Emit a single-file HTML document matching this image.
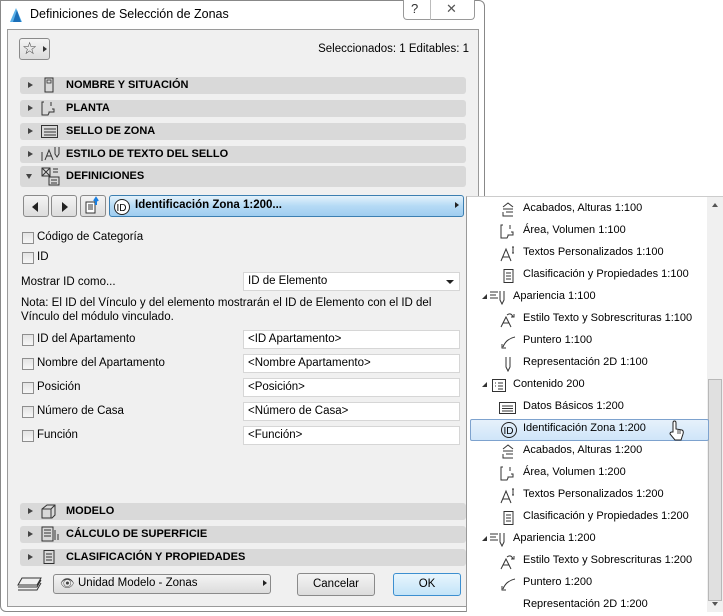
<!DOCTYPE html>
<html><head><meta charset="utf-8"><style>
*{box-sizing:border-box;margin:0;padding:0}
body{width:723px;height:616px;background:#fff;position:relative;overflow:hidden;font-family:"Liberation Sans",sans-serif;font-size:11.5px;color:#000}
.a{position:absolute}
.win{left:0;top:0;width:485px;height:612px;border:1px solid #888;border-radius:0 6px 6px 6px;background:#fff}
.client{left:7px;top:29px;width:472px;height:578px;background:#f0f0f0;border:1px solid #9a9a9a}
.bar{position:absolute;left:20px;width:446px;height:17px;background:#d9d9d9;border-radius:3px;font-weight:bold;font-size:11px}
.bar .t{position:absolute;left:46px;top:2px}
.bar .tri{position:absolute;left:8px;top:5px;width:0;height:0;border-left:5px solid #444;border-top:3.5px solid transparent;border-bottom:3.5px solid transparent}
.bar svg{position:absolute;left:20px;top:0}
.cb{position:absolute;left:22px;width:12px;height:12px;border:1px solid #8e8e8e;background:linear-gradient(#e4e4e4,#f6f6f6)}
.lbl{position:absolute;left:37px}
.inp{position:absolute;left:243px;width:217px;height:19px;background:#fff;border:1px solid #d6d6d6;padding:2px 4px}
.btn{position:absolute;border:1px solid #8a8a8a;border-radius:3px;background:linear-gradient(#f4f4f4,#dcdcdc);text-align:center}
.pop{left:466px;top:196px;width:257px;height:416px;background:#fff;border-left:1px solid #999;border-top:1px solid #ccc}
.it{position:absolute;white-space:nowrap}
.it svg{position:absolute;left:-24px;top:0}
</style></head><body>
<div class="a win"></div>
<svg class="a" style="left:9px;top:7px" width="14" height="16"><path d="M1 15 L7 1 L13 15Z" fill="#5ab0e8"/><path d="M4 15 L8 3 L12 15Z" fill="#1b6fb8"/></svg>
<div class="a" style="left:30px;top:7px;font-size:12.5px">Definiciones de Selección de Zonas</div>
<div class="a" style="left:403px;top:0;width:72px;height:20px;border:1px solid #999;border-top:none;border-radius:0 0 4px 4px;background:#fff"></div>
<div class="a" style="left:430px;top:0;width:1px;height:20px;background:#bbb"></div>
<div class="a" style="left:411px;top:1px;font-size:13px;color:#333">?</div>
<div class="a" style="left:446px;top:1px;font-size:13px;color:#555">✕</div>
<div class="a client"></div>
<div class="btn" style="left:19px;top:38px;width:31px;height:22px"><span style="position:absolute;left:2px;top:0px;font-size:17px;color:#444">☆</span><span style="position:absolute;left:23px;top:7px;border-left:4px solid #333;border-top:3px solid transparent;border-bottom:3px solid transparent"></span></div>
<div class="a" style="right:254px;top:43px">Seleccionados: 1 Editables: 1</div>

<div class="bar" style="top:77px"><span class="tri"></span><svg width="20" height="17"><rect x="5" y="1" width="8" height="14" fill="none" stroke="#333"/><rect x="7" y="3" width="4" height="3" fill="none" stroke="#333" stroke-width=".8"/></svg><span class="t">NOMBRE Y SITUACIÓN</span></div>
<div class="bar" style="top:100px"><span class="tri"></span><svg width="22" height="17"><path d="M4 2H2V15H8L9 13V12H14V9H12" fill="none" stroke="#333"/><path d="M11 2V6" stroke="#333"/></svg><span class="t">PLANTA</span></div>
<div class="bar" style="top:123px"><span class="tri"></span><svg width="22" height="17"><rect x="1.5" y="2.5" width="16" height="12" fill="none" stroke="#333"/><path d="M4 6H16M4 9H16M4 12H16" stroke="#333"/></svg><span class="t">SELLO DE ZONA</span></div>
<div class="bar" style="top:146px"><span class="tri"></span><svg width="26" height="17"><path d="M2 6V15M5 14L9 4L13 14M7 10H11M15 1V8L17 11L19 8V1" fill="none" stroke="#333"/></svg><span class="t">ESTILO DE TEXTO DEL SELLO</span></div>
<div class="bar" style="top:166px;height:21px"><span style="position:absolute;left:6px;top:8px;border-top:5px solid #444;border-left:3.5px solid transparent;border-right:3.5px solid transparent"></span><svg width="24" height="21"><rect x="2" y="2" width="8" height="8" fill="none" stroke="#333"/><path d="M2 2L10 10M10 2L2 10" stroke="#333"/><rect x="9" y="11" width="10" height="8" fill="none" stroke="#333"/><path d="M11 14H17M11 17H17M13 3H18M13 6H18" stroke="#333"/></svg><span class="t" style="top:4px">DEFINICIONES</span></div>

<div class="btn" style="left:23px;top:195px;width:26px;height:22px"><span style="position:absolute;left:8px;top:6px;border-right:6px solid #222;border-top:5px solid transparent;border-bottom:5px solid transparent"></span></div>
<div class="btn" style="left:51px;top:195px;width:26px;height:22px"><span style="position:absolute;left:10px;top:6px;border-left:6px solid #222;border-top:5px solid transparent;border-bottom:5px solid transparent"></span></div>
<div class="btn" style="left:80px;top:195px;width:26px;height:22px"><svg width="24" height="20"><rect x="5" y="6" width="9" height="11" fill="#fff" stroke="#333"/><path d="M7 9H12M7 11H12M7 13H12" stroke="#333"/><path d="M15 9V3M13 5L15 2L17 5" stroke="#1a7fe0" stroke-width="2" fill="none"/></svg></div>
<div class="a" style="left:109px;top:195px;width:355px;height:22px;border:1px solid #3c7fb1;border-radius:3px;background:linear-gradient(#e4f2fb,#b5daf5 50%,#9fcdf0)"><svg class="a" style="left:3px;top:2px" width="18" height="18"><circle cx="9" cy="9" r="7.5" fill="#fff" stroke="#222"/><text x="3.5" y="13" font-size="10" font-family="Liberation Sans">ID</text></svg><span class="a" style="left:25px;top:3px;font-weight:bold">Identificación Zona 1:200...</span><span class="a" style="left:345px;top:6px;border-left:4px solid #222;border-top:3.5px solid transparent;border-bottom:3.5px solid transparent"></span></div>

<div class="cb" style="top:232px"></div><div class="lbl" style="top:231px">Código de Categoría</div>
<div class="cb" style="top:252px"></div><div class="lbl" style="top:251px">ID</div>
<div class="a" style="left:21px;top:276px">Mostrar ID como...</div>
<div class="inp" style="top:272px">ID de Elemento<span class="a" style="right:5px;top:7px;border-top:4px solid #222;border-left:4px solid transparent;border-right:4px solid transparent"></span></div>
<div class="a" style="left:21px;top:296px;line-height:14px;width:440px">Nota: El ID del Vínculo y del elemento mostrarán el ID de Elemento con el ID del Vínculo del módulo vinculado.</div>
<div class="cb" style="top:334px"></div><div class="lbl" style="top:333px">ID del Apartamento</div><div class="inp" style="top:330px">&lt;ID Apartamento&gt;</div>
<div class="cb" style="top:358px"></div><div class="lbl" style="top:357px">Nombre del Apartamento</div><div class="inp" style="top:354px">&lt;Nombre Apartamento&gt;</div>
<div class="cb" style="top:382px"></div><div class="lbl" style="top:381px">Posición</div><div class="inp" style="top:378px">&lt;Posición&gt;</div>
<div class="cb" style="top:406px"></div><div class="lbl" style="top:405px">Número de Casa</div><div class="inp" style="top:402px">&lt;Número de Casa&gt;</div>
<div class="cb" style="top:430px"></div><div class="lbl" style="top:429px">Función</div><div class="inp" style="top:426px">&lt;Función&gt;</div>

<div class="bar" style="top:503px"><span class="tri"></span><svg width="22" height="17"><path d="M2 6L7 2H15V12L12 15H2Z M2 6H11V15 M11 6L15 2" fill="none" stroke="#333"/></svg><span class="t">MODELO</span></div>
<div class="bar" style="top:526px"><span class="tri"></span><svg width="22" height="17"><rect x="2" y="1" width="11" height="14" fill="none" stroke="#333"/><path d="M4 4H11M4 7H11M4 10H11M15 4V14M18 8V14" stroke="#333"/></svg><span class="t">CÁLCULO DE SUPERFICIE</span></div>
<div class="bar" style="top:549px"><span class="tri"></span><svg width="22" height="17"><rect x="4" y="1.5" width="10" height="13" fill="none" stroke="#333"/><path d="M6 5H12M6 8H12M6 11H12" stroke="#333"/></svg><span class="t">CLASIFICACIÓN Y PROPIEDADES</span></div>

<svg class="a" style="left:17px;top:576px" width="26" height="18"><path d="M5 2H24L20 9H1Z M1 11H20L24 4 M1 14H20L24 7" fill="none" stroke="#333"/></svg>
<div class="btn" style="left:53px;top:574px;width:218px;height:20px;text-align:left"><span class="a" style="left:6px;top:1px;color:#444">👁</span><span class="a" style="left:24px;top:2px">Unidad Modelo - Zonas</span><span class="a" style="left:209px;top:5px;border-left:4px solid #222;border-top:3.5px solid transparent;border-bottom:3.5px solid transparent"></span></div>
<div class="btn" style="left:297px;top:573px;width:78px;height:23px;padding-top:4px">Cancelar</div>
<div class="btn" style="left:393px;top:573px;width:68px;height:23px;padding-top:4px;border-color:#3c8fd0;background:linear-gradient(#e8f5fd,#c3e4f8)">OK</div>

<div class="a pop">
<div class="a" style="left:240px;top:0;width:16px;height:415px;background:#f0f0f0"></div>
<div class="a" style="left:241px;top:182px;width:14px;height:222px;background:#e0e0e0;border:1px solid #b8b8b8"></div>
<div class="a" style="left:245px;top:6px;border-bottom:4px solid #555;border-left:3px solid transparent;border-right:3px solid transparent"></div>
<div class="a" style="left:245px;top:405px;border-top:4px solid #555;border-left:3px solid transparent;border-right:3px solid transparent"></div>
<div class="a" style="left:3px;top:222px;width:239px;height:22px;background:linear-gradient(#e6f1fb,#cfe5f9);border:1px solid #7da2ce;border-radius:2px"></div>
</div>
<div class="a" style="left:466px;top:196px;font-size:11px">
<div class="it" style="left:57px;top:6px"><svg width="20" height="16"><path d="M4 5L9 1L14 5M4 7H14M4 10V14H14M7 10H14" fill="none" stroke="#333"/></svg>Acabados, Alturas 1:100</div>
<div class="it" style="left:57px;top:28px"><svg width="20" height="16"><path d="M4 1H2V14H8L9 12V11H14V8H12M11 1V5" fill="none" stroke="#333"/></svg>Área, Volumen 1:100</div>
<div class="it" style="left:57px;top:50px"><svg width="20" height="16"><path d="M2 15L7 3L12 15M4 11H10M14 1V7M13 1H15M13 7H15" fill="none" stroke="#333"/></svg>Textos Personalizados 1:100</div>
<div class="it" style="left:57px;top:72px"><svg width="20" height="16"><rect x="5" y="1.5" width="9" height="13" fill="none" stroke="#333"/><path d="M7 5H12M7 8H12M7 11H12" stroke="#333"/></svg>Clasificación y Propiedades 1:100</div>
<div class="it" style="left:47px;top:94px"><span style="position:absolute;left:-31px;top:4px;border-bottom:5px solid #333;border-left:5px solid transparent"></span><svg width="22" height="18"><path d="M1 2H9M1 5H7M1 8H9M11 1V10L13 14L15 10V1" fill="none" stroke="#333"/></svg>Apariencia 1:100</div>
<div class="it" style="left:57px;top:116px"><svg width="20" height="16"><path d="M2 15L7 5L12 15M4 11H10M8 3Q12 0 14 5M12 5H15V2" fill="none" stroke="#333"/></svg>Estilo Texto y Sobrescrituras 1:100</div>
<div class="it" style="left:57px;top:138px"><svg width="20" height="16"><path d="M4 13Q7 5 16 3M3 10V14H7" fill="none" stroke="#333"/></svg>Puntero 1:100</div>
<div class="it" style="left:57px;top:160px"><svg width="20" height="16"><path d="M7 1V11L9 15L11 11V1" fill="none" stroke="#333"/></svg>Representación 2D 1:100</div>
<div class="it" style="left:47px;top:182px"><span style="position:absolute;left:-31px;top:4px;border-bottom:5px solid #333;border-left:5px solid transparent"></span><svg width="22" height="16"><rect x="3.5" y="1.5" width="13" height="12" fill="none" stroke="#333"/><path d="M6 5H7M9 5H14M6 8H7M9 8H14M9 11H14" stroke="#333"/></svg>Contenido 200</div>
<div class="it" style="left:57px;top:204px"><svg width="22" height="16"><rect x="0.5" y="2.5" width="16" height="11" fill="none" stroke="#333"/><path d="M3 6H14M3 8.5H14M3 11H14" stroke="#333"/></svg>Datos Básicos 1:200</div>
<div class="it" style="left:57px;top:226px"><svg width="22" height="18"><circle cx="10" cy="8" r="7.5" fill="none" stroke="#222"/><text x="4.5" y="12" font-size="10" font-family="Liberation Sans">ID</text></svg>Identificación Zona 1:200</div>
<div class="it" style="left:57px;top:248px"><svg width="20" height="16"><path d="M4 5L9 1L14 5M4 7H14M4 10V14H14M7 10H14" fill="none" stroke="#333"/></svg>Acabados, Alturas 1:200</div>
<div class="it" style="left:57px;top:270px"><svg width="20" height="16"><path d="M4 1H2V14H8L9 12V11H14V8H12M11 1V5" fill="none" stroke="#333"/></svg>Área, Volumen 1:200</div>
<div class="it" style="left:57px;top:292px"><svg width="20" height="16"><path d="M2 15L7 3L12 15M4 11H10M14 1V7M13 1H15M13 7H15" fill="none" stroke="#333"/></svg>Textos Personalizados 1:200</div>
<div class="it" style="left:57px;top:314px"><svg width="20" height="16"><rect x="5" y="1.5" width="9" height="13" fill="none" stroke="#333"/><path d="M7 5H12M7 8H12M7 11H12" stroke="#333"/></svg>Clasificación y Propiedades 1:200</div>
<div class="it" style="left:47px;top:336px"><span style="position:absolute;left:-31px;top:4px;border-bottom:5px solid #333;border-left:5px solid transparent"></span><svg width="22" height="18"><path d="M1 2H9M1 5H7M1 8H9M11 1V10L13 14L15 10V1" fill="none" stroke="#333"/></svg>Apariencia 1:200</div>
<div class="it" style="left:57px;top:358px"><svg width="20" height="16"><path d="M2 15L7 5L12 15M4 11H10M8 3Q12 0 14 5M12 5H15V2" fill="none" stroke="#333"/></svg>Estilo Texto y Sobrescrituras 1:200</div>
<div class="it" style="left:57px;top:380px"><svg width="20" height="16"><path d="M4 13Q7 5 16 3M3 10V14H7" fill="none" stroke="#333"/></svg>Puntero 1:200</div>
<div class="it" style="left:57px;top:402px;height:11px;overflow:hidden"><svg width="20" height="16"><path d="M7 1V11M11 1V11" fill="none" stroke="#333"/></svg>Representación 2D 1:200</div>
</div>
<svg class="a" style="left:668px;top:420px" width="18" height="22"><path d="M5 12V3Q5 1 6.5 1Q8 1 8 3V9L14 10Q16 11 15 14L13 20H7L2 14Q2 12 4 12Z" fill="#fff" stroke="#222"/><path d="M10 10V14M12 10V14" stroke="#222" stroke-width=".8"/></svg>
</body></html>
